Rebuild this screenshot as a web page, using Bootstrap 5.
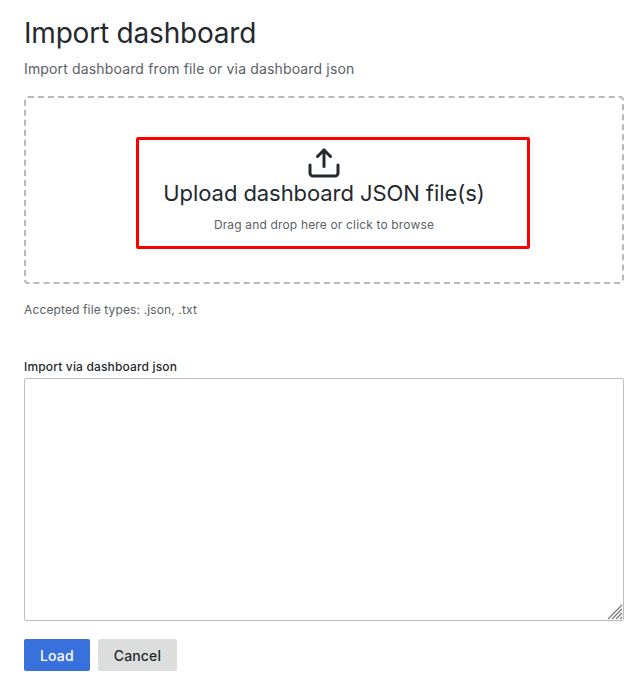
<!DOCTYPE html>
<html lang="en">
<head>
  <meta charset="UTF-8">
  <meta name="viewport" content="width=device-width, initial-scale=1.0">
  <title>Import dashboard</title>
  <link href="https://cdn.jsdelivr.net/npm/bootstrap@5.3.0/dist/css/bootstrap.min.css" rel="stylesheet">
  <style>
    body {
      font-family: Inter, "Liberation Sans", sans-serif;
      color: #24292e;
      background-color: #fff;
    }
    .page-wrap {
      padding: 16px 14px 0 24px;
    }
    .page-title {
      font-size: 28px;
      font-weight: 400;
      line-height: 34px;
      letter-spacing: -0.2px;
      margin: 0 0 12px;
    }
    .page-sub {
      font-size: 14px;
      line-height: 14px;
      letter-spacing: 0.15px;
      color: #5b6067;
      margin-bottom: 20px;
    }
    .drop-zone {
      height: 188px;
      border: 2px dashed #b9b9b9;
      border-radius: 4px;
    }
    /* red box sits off centre, the text inside stays centred on the zone */
    .drop-inner {
      width: 394px;
      height: 112px;
      margin: 6px 0 0 18px;
      border: 3px solid #f00;
      border-radius: 2px;
      color: #24292e;
      padding: 7px 18px 0 0;
    }
    .drop-inner svg {
      margin-bottom: 1px;
    }
    .drop-title {
      font-size: 22px;
      line-height: 26px;
      letter-spacing: -0.07px;
    }
    .drop-hint {
      font-size: 12px;
      line-height: 14px;
      letter-spacing: 0.16px;
      color: #5b6067;
      margin-top: 12px;
    }
    .accept-note {
      font-size: 12px;
      line-height: 14px;
      letter-spacing: 0.13px;
      color: #5b6067;
      margin-top: 19px;
      margin-bottom: 43px;
    }
    .json-label {
      font-size: 12px;
      font-weight: 500;
      line-height: 14px;
      letter-spacing: 0.16px;
      margin-bottom: 4px;
      display: block;
    }
    .json-wrap {
      height: 243px;
    }
    .json-input {
      display: block;
      width: 100%;
      height: 100%;
      border: 1px solid #bdbdbd;
      border-radius: 2px;
      outline: none;
      resize: none;
    }
    .json-grip {
      position: absolute;
      right: 1px;
      bottom: 1px;
      pointer-events: none;
    }
    .btn-row {
      margin-top: 18px;
    }
    .btn-load, .btn-cancel {
      font-size: 14px;
      font-weight: 500;
      letter-spacing: 0.15px;
      height: 32px;
      padding: 1px 16px 0;
      border: 0;
      border-radius: 2px;
      line-height: 31px;
    }
    .btn-load {
      background-color: #3871dc;
      color: #fff;
    }
    .btn-cancel {
      background-color: #dcdddd;
      color: #24292e;
    }
  </style>
</head>

<body>
  <div class="page-wrap">
    <h1 class="page-title">Import dashboard</h1>
    <div class="page-sub">Import dashboard from file or via dashboard json</div>

    <div class="drop-zone d-flex align-items-center justify-content-center">
      <div class="drop-inner text-center d-flex flex-column align-items-center">
        <svg width="32" height="32" viewBox="0 0 32 32" fill="none" stroke="#24292e" stroke-width="3" stroke-linecap="round" stroke-linejoin="round">
          <path d="M16 19.500V3"/>
          <path d="M9.500 9.500 16 3l6.500 6.500"/>
          <path d="M2 18v8a3 3 0 0 0 3 3h22a3 3 0 0 0 3-3v-8"/>
        </svg>
        <div class="drop-title">Upload dashboard JSON file(s)</div>
        <div class="drop-hint">Drag and drop here or click to browse</div>
      </div>
    </div>

    <div class="accept-note">Accepted file types: .json, .txt</div>

    <label class="json-label" for="dashJson">Import via dashboard json</label>
    <div class="json-wrap position-relative">
      <textarea class="json-input" id="dashJson"></textarea>
      <svg class="json-grip" width="16" height="16" viewBox="0 0 16 16" fill="none" stroke="#777" stroke-width="1.2">
        <path d="M1 15 15 1M5 15 15 5M9 15l6-6M13 15l2-2"/>
      </svg>
    </div>

    <div class="btn-row d-flex gap-2">
      <button class="btn btn-load">Load</button>
      <button class="btn btn-cancel">Cancel</button>
    </div>
  </div>

  <script src="https://cdn.jsdelivr.net/npm/bootstrap@5.3.0/dist/js/bootstrap.bundle.min.js"></script>
</body>
</html>
